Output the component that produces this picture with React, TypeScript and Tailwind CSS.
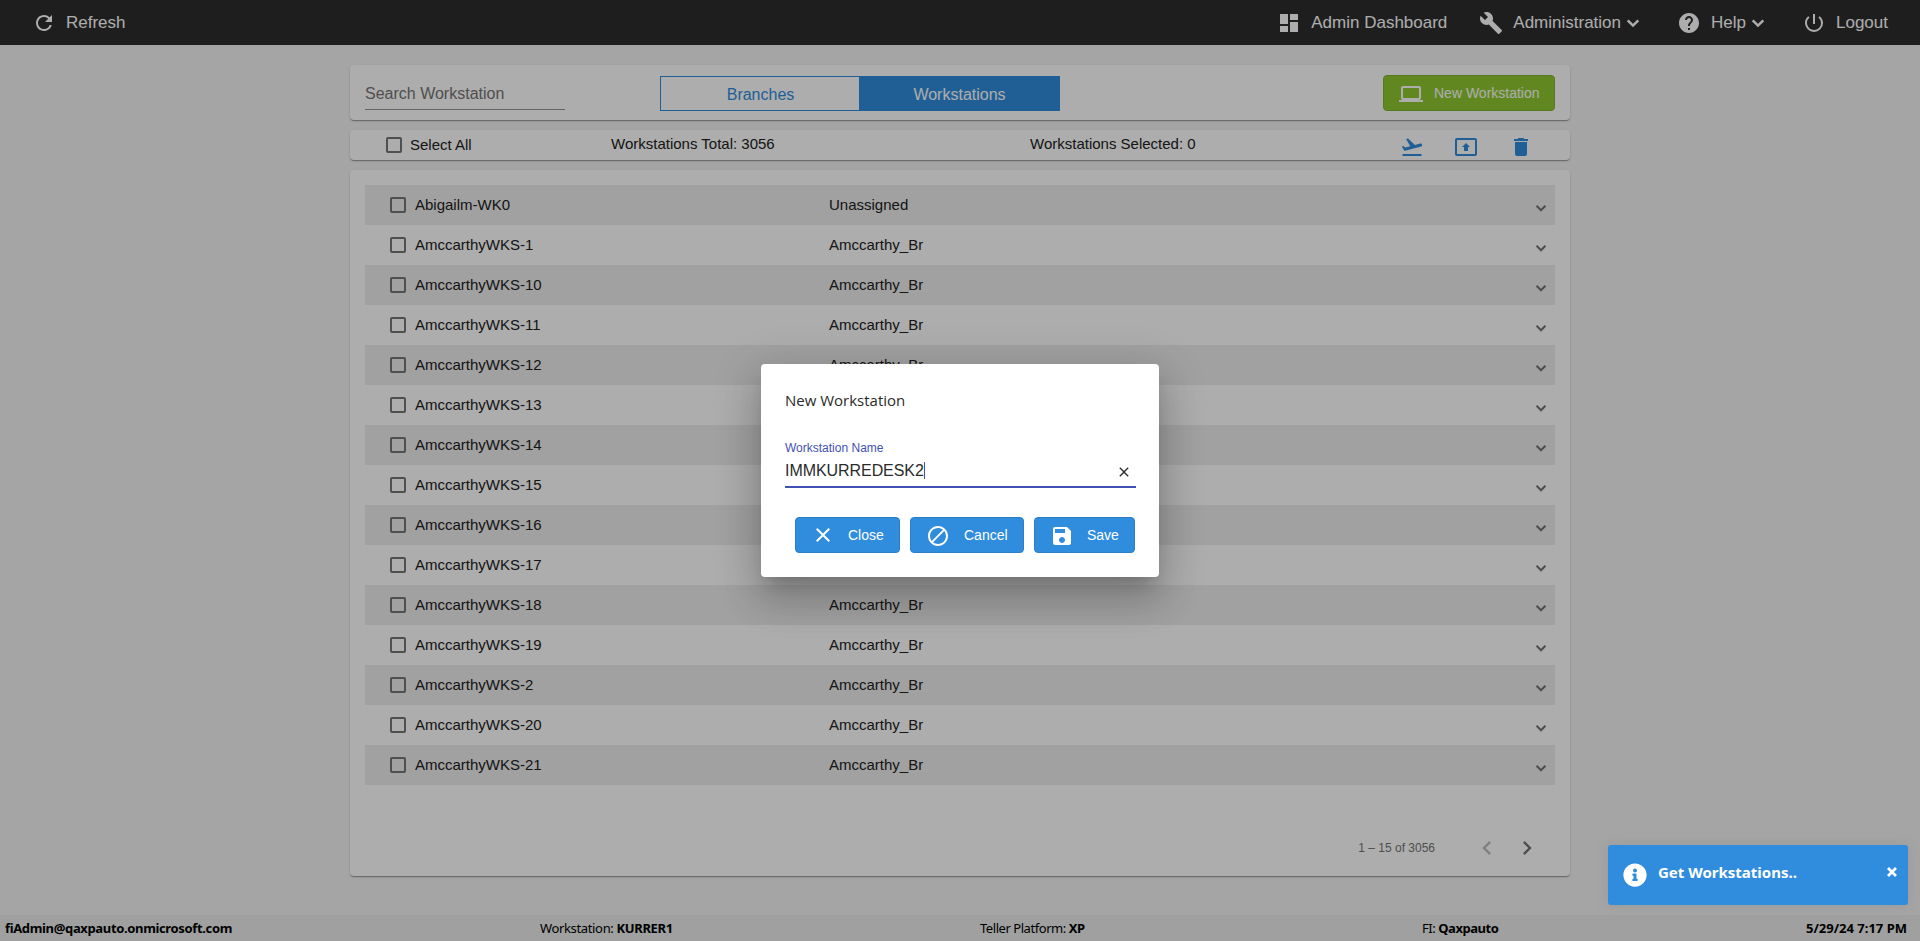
import clsx from 'clsx';
import {
    MdBlock,
    MdBuild,
    MdClose,
    MdDashboard,
    MdDelete,
    MdFlightTakeoff,
    MdHelp,
    MdLaptop,
    MdNavigateBefore,
    MdNavigateNext,
    MdPowerSettingsNew,
    MdRefresh,
    MdSave,
} from 'react-icons/md';
import { FaInfoCircle } from 'react-icons/fa';

const workstations = [
    { name: 'Abigailm-WK0', branch: 'Unassigned' },
    { name: 'AmccarthyWKS-1', branch: 'Amccarthy_Br' },
    { name: 'AmccarthyWKS-10', branch: 'Amccarthy_Br' },
    { name: 'AmccarthyWKS-11', branch: 'Amccarthy_Br' },
    { name: 'AmccarthyWKS-12', branch: 'Amccarthy_Br' },
    { name: 'AmccarthyWKS-13', branch: 'Amccarthy_Br' },
    { name: 'AmccarthyWKS-14', branch: 'Amccarthy_Br' },
    { name: 'AmccarthyWKS-15', branch: 'Amccarthy_Br' },
    { name: 'AmccarthyWKS-16', branch: 'Amccarthy_Br' },
    { name: 'AmccarthyWKS-17', branch: 'Amccarthy_Br' },
    { name: 'AmccarthyWKS-18', branch: 'Amccarthy_Br' },
    { name: 'AmccarthyWKS-19', branch: 'Amccarthy_Br' },
    { name: 'AmccarthyWKS-2', branch: 'Amccarthy_Br' },
    { name: 'AmccarthyWKS-20', branch: 'Amccarthy_Br' },
    { name: 'AmccarthyWKS-21', branch: 'Amccarthy_Br' },
];

const card =
    'rounded bg-white shadow-[0_2px_1px_-1px_rgba(0,0,0,0.2),0_1px_1px_0_rgba(0,0,0,0.14),0_1px_3px_0_rgba(0,0,0,0.12)]';

function Checkbox() {
    return <span role="checkbox" aria-checked="false" className="size-4 rounded-[2px] border-2 border-[#757575]" />;
}

function Chevron({ className }: { className: string }) {
    return (
        <svg viewBox="0 0 24 24" className={className} fill="none" stroke="currentColor" strokeWidth="2.5">
            <path d="M6.7 9.3l5.3 5.3 5.3-5.3" />
        </svg>
    );
}

function Header() {
    return (
        <header className="flex h-[45px] items-center bg-[#2d2d2d] pr-8 pl-8 text-[17px] leading-5 text-white">
            <button className="flex items-center">
                <MdRefresh className="mt-px size-6" />
                <span className="ml-2.5">Refresh</span>
            </button>
            <nav className="ml-auto flex items-center">
                <button className="flex items-center">
                    <MdDashboard className="mt-px size-6" />
                    <span className="ml-2.5">Admin Dashboard</span>
                </button>
                <button className="ml-8 flex items-center">
                    <MdBuild className="mt-px size-6" />
                    <span className="ml-2.5">Administration</span>
                    <Chevron className="size-6" />
                </button>
                <button className="ml-8 flex items-center">
                    <MdHelp className="mt-px size-6" />
                    <span className="ml-2.5">Help</span>
                    <Chevron className="size-6" />
                </button>
                <button className="ml-8 flex items-center">
                    <MdPowerSettingsNew className="mt-px size-6" />
                    <span className="ml-2.5">Logout</span>
                </button>
            </nav>
        </header>
    );
}

function Toolbar() {
    return (
        <section className={clsx(card, 'flex h-[55px] items-start px-[15px]')}>
            <div className="mt-[17px] h-7 w-[200px] border-b border-[#949494] text-base leading-[23px] text-[#757575]">
                Search Workstation
            </div>
            <div className="mt-[11px] ml-[95px] flex h-[35px] w-[400px] text-base">
                <button className="w-[200px] border border-[#308ddd] pt-0.5 pl-px text-[#308ddd]">Branches</button>
                <button className="w-[200px] bg-[#308ddd] pt-0.5 pr-px text-white">Workstations</button>
            </div>
            <button className="mt-2.5 ml-auto flex h-9 w-[172px] items-center rounded border border-[#80b32b] bg-[#90c930] pl-[15px] text-sm text-white">
                <MdLaptop className="mt-0.5 size-6" />
                <span className="ml-[11px]">New Workstation</span>
            </button>
        </section>
    );
}

function SelectionBar() {
    return (
        <section className={clsx(card, 'mt-2.5 flex h-[30px] pl-9 text-[15px] leading-[28px] text-[#212121]')}>
            <div className="flex w-[225px] items-center">
                <Checkbox />
                <span className="ml-2">Select All</span>
            </div>
            <div className="w-[419px]">Workstations Total: 3056</div>
            <div className="w-[370px]">Workstations Selected: 0</div>
            <div className="flex items-center gap-[30px] pt-1 text-[#308ddd]">
                <MdFlightTakeoff className="size-6" />
                <svg viewBox="0 0 24 24" className="size-6" fill="currentColor">
                    <path d="M21 3H3c-1.11 0-2 .89-2 2v14c0 1.1.89 2 2 2h18c1.1 0 2-.9 2-2V5c0-1.11-.9-2-2-2zm0 16.02H3V4.98h18v14.04zM10 12H8l4-4 4 4h-2v4h-4v-4z" />
                </svg>
                <MdDelete className="ml-px size-6" />
            </div>
        </section>
    );
}

function WorkstationList() {
    return (
        <section className={clsx(card, 'mt-2.5 flex h-[706px] flex-col p-[15px] text-[15px] text-[#212121]')}>
            <ul>
                {workstations.map((w) => (
                    <li key={w.name} className="flex h-10 items-center pl-[25px] odd:bg-[#ededed]">
                        <Checkbox />
                        <span className="ml-[9px] w-[414px]">{w.name}</span>
                        <span>{w.branch}</span>
                        <Chevron className="mt-1.5 mr-1 ml-auto size-5 text-[#757575]" />
                    </li>
                ))}
            </ul>
            <div className="mt-[49px] flex items-center justify-end pr-3.5 text-xs text-[#757575]">
                <span className="mr-[38px]">1 – 15 of 3056</span>
                <MdNavigateBefore className="size-7 text-[#bdbdbd]" />
                <MdNavigateNext className="ml-3 size-7" />
            </div>
        </section>
    );
}

function Footer() {
    return (
        <footer className="mt-auto flex h-[26px] items-center bg-[#eaeceb] px-[5px] pt-0.5 font-['Noto_Sans',sans-serif] text-[13px] tracking-[-0.35px] text-black">
            <b className="w-[535px]">fiAdmin@qaxpauto.onmicrosoft.com</b>
            <span className="w-[440px]">
                Workstation: <b>KURRER1</b>
            </span>
            <span className="w-[442px] tracking-[-0.45px]">
                Teller Platform: <b>XP</b>
            </span>
            <span className="tracking-[-0.45px]">
                FI: <b>Qaxpauto</b>
            </span>
            <b className="ml-auto pr-2 tracking-normal">5/29/24 7:17 PM</b>
        </footer>
    );
}

const dialogButton =
    'flex h-9 items-center rounded border border-[#2b7fc7] bg-[#308ddd] pl-[15px] text-sm text-white';

function NewWorkstationDialog() {
    return (
        <div className="absolute inset-0 flex items-center justify-center bg-black/32">
            <div
                role="dialog"
                className="h-[213px] w-[398px] rounded bg-white px-6 text-[#2b2b2b] shadow-[0_11px_15px_-7px_rgba(0,0,0,0.2),0_24px_38px_3px_rgba(0,0,0,0.14),0_9px_46px_8px_rgba(0,0,0,0.12)]"
            >
                <h2 className="pt-6 font-['Open_Sans',sans-serif] text-[15px] leading-6">New Workstation</h2>
                <div className="mt-[29px] h-[47px] w-[351px] border-b-2 border-[#3f51b5]">
                    <label className="block text-xs leading-[15px] text-[#3f51b5]">Workstation Name</label>
                    <div className="mt-1 flex items-center">
                        <span className="pt-px text-base leading-5 tracking-[-0.06px]">IMMKURREDESK2</span>
                        <span className="h-[17px] w-px bg-[#3f51b5]" />
                        <MdClose className="mt-0.5 mr-1 ml-auto size-4" />
                    </div>
                </div>
                <div className="mt-[29px] ml-2.5 flex gap-2.5">
                    <button className={clsx(dialogButton, 'w-[105px]')}>
                        <MdClose className="size-6" />
                        <span className="ml-[13px]">Close</span>
                    </button>
                    <button className={clsx(dialogButton, 'w-[114px]')}>
                        <MdBlock className="mt-px size-6" />
                        <span className="ml-3.5">Cancel</span>
                    </button>
                    <button className={clsx(dialogButton, 'w-[101px]')}>
                        <MdSave className="mt-px size-6" />
                        <span className="ml-[13px]">Save</span>
                    </button>
                </div>
            </div>
        </div>
    );
}

function Toast() {
    return (
        <div className="absolute right-3 bottom-9 flex h-[60px] w-[300px] rounded-[3px] bg-[#308ddd] pl-[15px] font-['Noto_Sans',sans-serif] text-[15px] leading-5 font-bold text-white shadow-[0_0_12px_#999999]">
            <FaInfoCircle className="mt-[18px] size-6" />
            <span className="mt-[17px] ml-[11px]">Get Workstations..</span>
            <svg viewBox="0 0 10 10" className="mt-[22px] mr-[11px] ml-auto size-2.5" stroke="currentColor" strokeWidth="2.8">
                <path d="M1 1l8 8M9 1l-8 8" />
            </svg>
        </div>
    );
}

export default function App() {
    return (
        <div className="relative flex h-[941px] w-[1920px] flex-col overflow-hidden bg-[#f3f3f3] font-['Liberation_Sans',Arial,sans-serif]">
            <Header />
            <main className="mx-auto mt-5 w-[1220px]">
                <Toolbar />
                <SelectionBar />
                <WorkstationList />
            </main>
            <Footer />
            <NewWorkstationDialog />
            <Toast />
        </div>
    );
}
